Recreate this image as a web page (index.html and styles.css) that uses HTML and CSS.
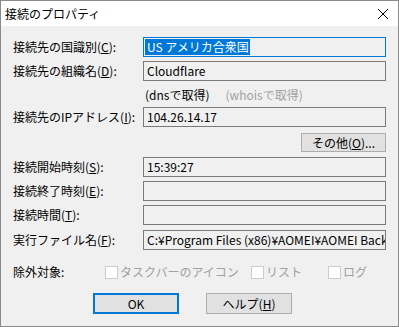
FILE: index.html
```html
<!DOCTYPE html>
<html lang="ja">
<head>
    <meta charset="UTF-8">
    <title>接続のプロパティ</title>
    <link rel="stylesheet" href="styles.css">
</head>
<body>
    <div class="window">
        <div class="title-bar">
            <span class="title">接続のプロパティ</span>
            <svg class="close" width="12" height="12" viewBox="0 0 12 12">
                <path d="M1 1 L11 11 M11 1 L1 11" stroke="#000" stroke-width="1" fill="none"/>
            </svg>
        </div>
        <div class="content">
            <div class="row row-first">
                <label class="label">接続先の国識別(<u>C</u>):</label>
                <div class="field focused"><span class="selected">US アメリカ合衆国</span></div>
            </div>
            <div class="row">
                <label class="label">接続先の組織名(<u>D</u>):</label>
                <div class="field">Cloudflare</div>
            </div>
            <div class="note-row">
                <span class="note">(dnsで取得)</span>
                <span class="note disabled">(whoisで取得)</span>
            </div>
            <div class="row row-ip">
                <label class="label">接続先のIPアドレス(<u>I</u>):</label>
                <div class="field">104.26.14.17</div>
            </div>
            <div class="button-row">
                <button class="btn btn-other">その他(<u>O</u>)...</button>
            </div>
            <div class="row row-start">
                <label class="label">接続開始時刻(<u>S</u>):</label>
                <div class="field">15:39:27</div>
            </div>
            <div class="row">
                <label class="label">接続終了時刻(<u>E</u>):</label>
                <div class="field"></div>
            </div>
            <div class="row">
                <label class="label">接続時間(<u>T</u>):</label>
                <div class="field"></div>
            </div>
            <div class="row row-exec">
                <label class="label">実行ファイル名(<u>F</u>):</label>
                <div class="field">C:¥Program Files (x86)¥AOMEI¥AOMEI Backupper¥Backupper.exe</div>
            </div>
            <div class="exclude-row">
                <span class="exclude-label">除外対象:</span>
                <span class="check check-taskbar"><span class="box"></span>タスクバーのアイコン</span>
                <span class="check check-list"><span class="box"></span>リスト</span>
                <span class="check"><span class="box"></span>ログ</span>
            </div>
            <div class="footer">
                <button class="btn btn-ok">OK</button>
                <button class="btn btn-help">ヘルプ(<u>H</u>)</button>
            </div>
        </div>
    </div>
</body>
</html>
```

FILE: styles.css
```css
html, body {
    margin: 0;
    padding: 0;
}
body {
    font-family: "Noto Sans CJK JP", "Liberation Sans", sans-serif;
    font-size: 12px;
    color: #000;
    background: #fff;
}
.window {
    width: 399px;
    height: 327px;
    box-sizing: border-box;
    border: 1px solid #8a8a8a;
    background: #f0f0f0;
    display: flex;
    flex-direction: column;
}
.title-bar {
    height: 25px;
    background: #fff;
    display: flex;
    align-items: center;
    justify-content: space-between;
    padding: 0 9px 0 4px;
}
.title {
    line-height: 14px;
}
.close {
    display: block;
}
.content {
    padding: 0 11px 0 12px;
    display: flex;
    flex-direction: column;
}
.row {
    display: flex;
    align-items: center;
    height: 20px;
    margin-top: 4px;
}
.row-first {
    margin-top: 11px;
}
.row-ip {
    margin-top: 0;
}
.row-start {
    margin-top: 5px;
}
.row-exec {
    margin-top: 5px;
}
.label {
    width: 130px;
    flex: none;
    white-space: nowrap;
    line-height: 14px;
}
.field {
    width: 243px;
    height: 20px;
    box-sizing: border-box;
    border: 1px solid #7a7a7a;
    background: #f0f0f0;
    padding-left: 3px;
    line-height: 18px;
    white-space: nowrap;
    overflow: hidden;
}
.field.focused {
    border-color: #0078d7;
    padding-left: 1px;
}
.selected {
    display: inline-block;
    background: #0078d7;
    color: #fff;
    padding: 0 1px 0 2px;
    line-height: 16px;
    margin-top: 1px;
    vertical-align: top;
}
.note-row {
    height: 26px;
    display: flex;
    align-items: center;
    padding-left: 132px;
    padding-top: 1px;
    box-sizing: border-box;
}
.note {
    line-height: 14px;
}
.note.disabled {
    color: #a0a0a0;
    margin-left: 16px;
}
.button-row {
    display: flex;
    justify-content: flex-end;
    margin-top: 6px;
}
.btn {
    font-family: inherit;
    font-size: 12px;
    color: #000;
    background: #e1e1e1;
    border: 1px solid #adadad;
    padding: 0;
    margin: 0;
    box-sizing: border-box;
    line-height: 14px;
}
.btn-other {
    width: 85px;
    height: 19px;
    margin-right: 1px;
}
.exclude-row {
    display: flex;
    align-items: center;
    height: 20px;
    margin-top: 12px;
}
.exclude-label {
    width: 92px;
    flex: none;
    line-height: 14px;
}
.check {
    display: flex;
    align-items: center;
    color: #a0a0a0;
    line-height: 14px;
    white-space: nowrap;
}
.check-taskbar {
    width: 146px;
}
.check-list {
    width: 77px;
}
.box {
    width: 13px;
    height: 13px;
    box-sizing: border-box;
    border: 1px solid #cccccc;
    background: #fff;
    margin-right: 2px;
    flex: none;
}
.footer {
    display: flex;
    gap: 27px;
    padding-left: 80px;
    margin-top: 11px;
}
.btn-ok,
.btn-help {
    width: 86px;
    height: 21px;
}
.btn-ok {
    border: 2px solid #0078d7;
}
```
